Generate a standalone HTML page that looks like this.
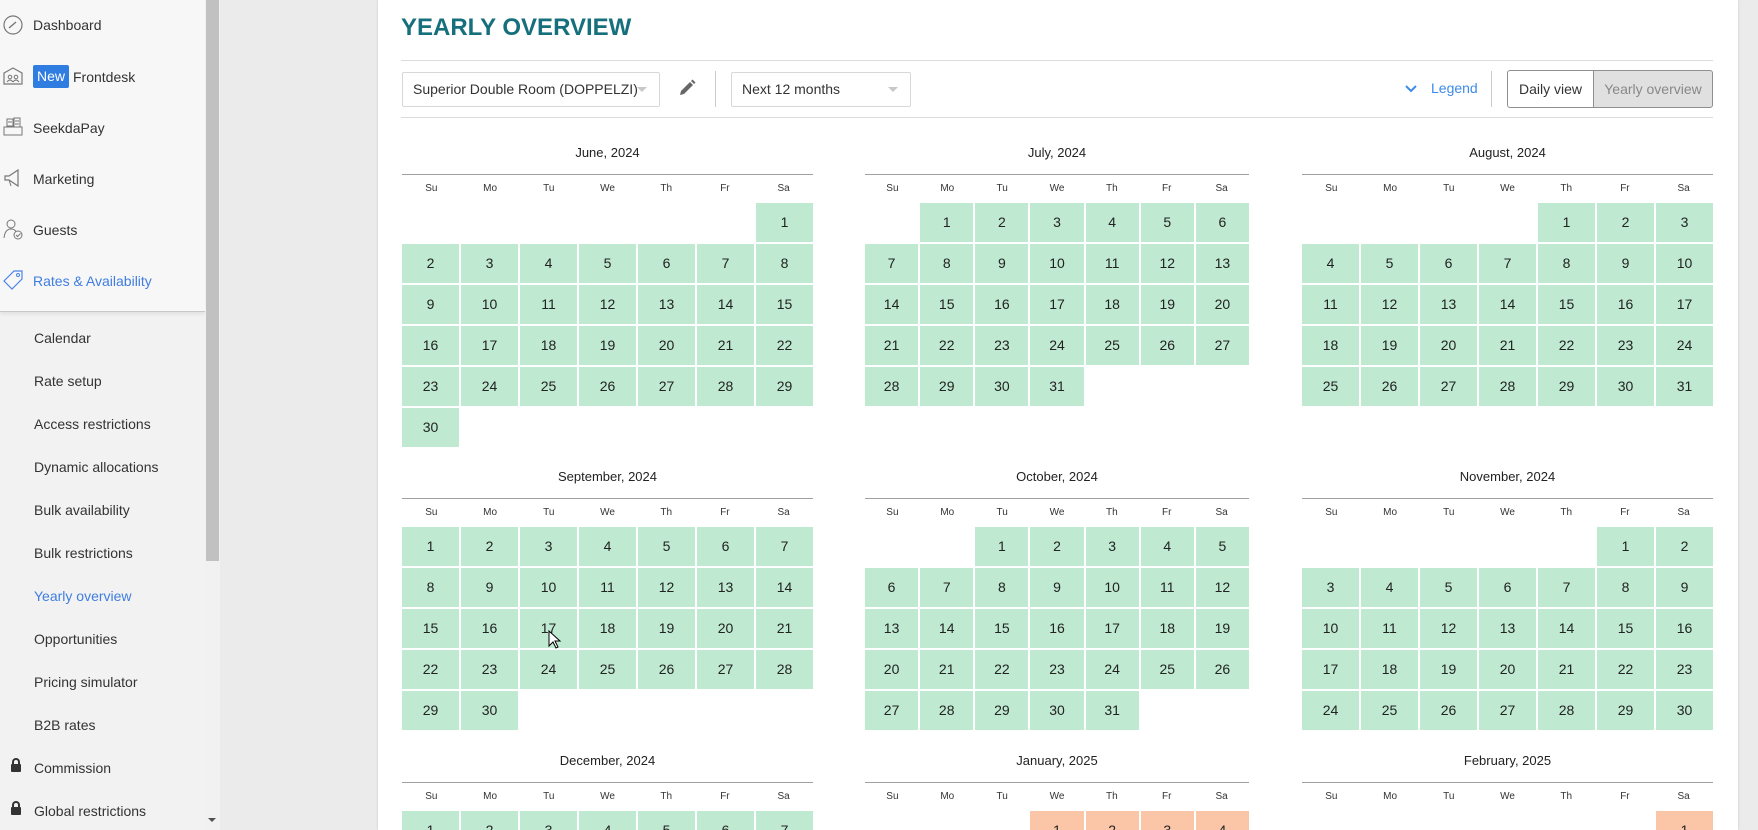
<!DOCTYPE html>
<html><head><meta charset="utf-8"><style>
*{box-sizing:border-box;margin:0;padding:0}
html,body{width:1758px;height:830px;overflow:hidden}
body{background:#ebebeb;font-family:"Liberation Sans",sans-serif;color:#333}
#root{position:relative;width:1758px;height:830px;overflow:hidden}
#side{position:absolute;left:0;top:0;width:205px;height:830px;background:#f2f2f2}
#sidetop{position:absolute;left:0;top:0;width:205px;height:312px;background:#f7f7f7;border-bottom:1px solid #c8c8c8;box-shadow:0 2px 4px rgba(0,0,0,.08)}
.ti{position:absolute;left:33px;font-size:14px;color:#333;line-height:18px}
.ic{position:absolute;left:2px;width:22px;height:22px}
.si{position:absolute;left:34px;font-size:14px;color:#333;line-height:18px}
#sb{position:absolute;left:205px;top:0;width:15px;height:830px;background:#f1f1f1}
#thumb{position:absolute;left:206px;top:0;width:13px;height:561px;background:#c1c1c1}
#card{position:absolute;left:378px;top:0;width:1360px;height:830px;background:#fff;box-shadow:0 0 3px rgba(0,0,0,.12)}
h1{position:absolute;left:401px;top:14px;font-size:24px;color:#16707c;font-weight:bold;letter-spacing:0}
.hl{position:absolute;left:401px;width:1312px;height:1px;background:#dcdcdc}
.sel{position:absolute;top:72px;height:35px;border:1px solid #d8d8d8;border-radius:2px;font-size:14px;line-height:33px;padding-left:10px;color:#333}
.sel:after{content:"";position:absolute;right:12px;top:14px;border-left:5px solid transparent;border-right:5px solid transparent;border-top:5px solid #c8c8c8}
.vd{position:absolute;top:71px;width:1px;height:36px;background:#ccc}
.btn{position:absolute;top:70px;height:38px;border:1px solid #8f8f8f;font-size:14px;line-height:36px;text-align:center}
.m{position:absolute}
.mt{text-align:center;font-size:13px;height:34px;line-height:24px;border-bottom:1px solid #a0a0a0;color:#222}
.dh{display:grid;grid-template-columns:repeat(7,1fr);font-size:10px;height:28px;line-height:28px;text-align:center;color:#333}
.g{display:grid;grid-template-columns:repeat(7,1fr);column-gap:2px;row-gap:2px;grid-auto-rows:39px}
.g b{background:#bfead1;font-weight:normal;font-size:14px;text-align:center;line-height:39px;color:#222}
.g.o b{background:#fbc5a7}
</style></head><body><div id="root">
<div id="side">
<div id="sidetop">
<svg class="ic" style="top:14px" viewBox="0 0 22 22"><circle cx="11" cy="11" r="9" fill="none" stroke="#777" stroke-width="1.2"/><path d="M7 14L14 8" stroke="#777" stroke-width="1.4"/></svg>
<div class="ti" style="top:16px">Dashboard</div>
<svg class="ic" style="top:65px" viewBox="0 0 22 22"><path d="M2 8L11 3L20 8V19H2Z" fill="none" stroke="#777" stroke-width="1.2"/><circle cx="8" cy="12" r="1.8" fill="none" stroke="#777"/><circle cx="14" cy="12" r="1.8" fill="none" stroke="#777"/><path d="M5 17Q8 13 11 17M11 17Q14 13 17 17" fill="none" stroke="#777"/></svg>
<div style="position:absolute;left:33px;top:65px;width:36px;height:23px;background:#2f7de1;border-radius:2px;color:#fff;font-size:14px;line-height:23px;text-align:center">New</div>
<div class="ti" style="left:73px;top:68px">Frontdesk</div>
<svg class="ic" style="top:116px" viewBox="0 0 22 22"><rect x="2" y="11" width="18" height="8" fill="none" stroke="#777"/><rect x="5" y="3" width="6" height="7" fill="none" stroke="#777"/><rect x="12" y="2" width="6" height="9" fill="none" stroke="#777"/><path d="M13 5h4M13 8h4M6 6h4" stroke="#777"/></svg>
<div class="ti" style="top:119px">SeekdaPay</div>
<svg class="ic" style="top:167px" viewBox="0 0 22 22"><path d="M3 9h4l9-6v16l-9-6H3z" fill="none" stroke="#777" stroke-width="1.2"/><path d="M7 13l2 6" stroke="#777"/></svg>
<div class="ti" style="top:170px">Marketing</div>
<svg class="ic" style="top:218px" viewBox="0 0 22 22"><circle cx="9" cy="6" r="4" fill="none" stroke="#777"/><path d="M2 20Q3 11 9 11Q13 11 14 14" fill="none" stroke="#777"/><circle cx="16" cy="17" r="4" fill="none" stroke="#777"/><path d="M14 17l1.5 1.5 3-3" fill="none" stroke="#777"/></svg>
<div class="ti" style="top:221px">Guests</div>
<svg class="ic" style="top:269px" viewBox="0 0 22 22"><path d="M2 12L12 2H20V10L10 20Z" fill="none" stroke="#4d84e6" stroke-width="1.2"/><circle cx="16" cy="6" r="1.5" fill="none" stroke="#4d84e6"/></svg>
<div class="ti" style="top:272px;color:#3f7de0">Rates &amp; Availability</div>
</div>
<div class="si" style="top:329px">Calendar</div>
<div class="si" style="top:372px">Rate setup</div>
<div class="si" style="top:415px">Access restrictions</div>
<div class="si" style="top:458px">Dynamic allocations</div>
<div class="si" style="top:501px">Bulk availability</div>
<div class="si" style="top:544px">Bulk restrictions</div>
<div class="si" style="top:587px;color:#3f7de0">Yearly overview</div>
<div class="si" style="top:630px">Opportunities</div>
<div class="si" style="top:673px">Pricing simulator</div>
<div class="si" style="top:716px">B2B rates</div>
<svg style="position:absolute;left:10px;top:758px" width="12" height="14" viewBox="0 0 12 14"><rect x="1" y="6" width="10" height="8" rx="1" fill="#333"/><path d="M3 6V4a3 3 0 0 1 6 0v2" fill="none" stroke="#333" stroke-width="2"/></svg>
<div class="si" style="top:759px">Commission</div>
<svg style="position:absolute;left:10px;top:801px" width="12" height="14" viewBox="0 0 12 14"><rect x="1" y="6" width="10" height="8" rx="1" fill="#333"/><path d="M3 6V4a3 3 0 0 1 6 0v2" fill="none" stroke="#333" stroke-width="2"/></svg>
<div class="si" style="top:802px">Global restrictions</div>
</div>
<div id="sb"></div><div id="thumb"></div>
<div style="position:absolute;left:208px;top:818px;border-left:4px solid transparent;border-right:4px solid transparent;border-top:4px solid #505050"></div>
<div id="card"></div>
<h1>YEARLY OVERVIEW</h1>
<div class="hl" style="top:60px"></div>
<div class="sel" style="left:402px;width:258px">Superior Double Room (DOPPELZI)</div>
<svg style="position:absolute;left:677px;top:78px" width="20" height="20" viewBox="0 0 20 20"><path d="M3 17l1-4 9-9 3 3-9 9z" fill="#666"/><path d="M14 3l1.5-1.5 3 3L17 6z" fill="#666"/></svg>
<div class="vd" style="left:715px"></div>
<div class="sel" style="left:731px;width:180px">Next 12 months</div>
<svg style="position:absolute;left:1404px;top:84px" width="14" height="10" viewBox="0 0 14 10"><path d="M2 2l5 5 5-5" fill="none" stroke="#3d8be8" stroke-width="2"/></svg>
<div style="position:absolute;left:1431px;top:80px;font-size:14px;color:#3d8be8">Legend</div>
<div class="vd" style="left:1491px"></div>
<div class="btn" style="left:1507px;width:87px;border-radius:3px 0 0 3px;color:#333">Daily view</div>
<div class="btn" style="left:1593px;width:120px;border-radius:0 3px 3px 0;background:#e0e0e0;color:#888">Yearly overview</div>
<div class="hl" style="top:117px"></div>

<div class="m" style="left:402px;top:141px;width:411px"><div class="mt">June, 2024</div><div class="dh"><span>Su</span><span>Mo</span><span>Tu</span><span>We</span><span>Th</span><span>Fr</span><span>Sa</span></div>
<div class="g"><i></i><i></i><i></i><i></i><i></i><i></i><b>1</b><b>2</b><b>3</b><b>4</b><b>5</b><b>6</b><b>7</b><b>8</b><b>9</b><b>10</b><b>11</b><b>12</b><b>13</b><b>14</b><b>15</b><b>16</b><b>17</b><b>18</b><b>19</b><b>20</b><b>21</b><b>22</b><b>23</b><b>24</b><b>25</b><b>26</b><b>27</b><b>28</b><b>29</b><b>30</b></div></div>

<div class="m" style="left:865px;top:141px;width:384px"><div class="mt">July, 2024</div><div class="dh"><span>Su</span><span>Mo</span><span>Tu</span><span>We</span><span>Th</span><span>Fr</span><span>Sa</span></div>
<div class="g"><i></i><b>1</b><b>2</b><b>3</b><b>4</b><b>5</b><b>6</b><b>7</b><b>8</b><b>9</b><b>10</b><b>11</b><b>12</b><b>13</b><b>14</b><b>15</b><b>16</b><b>17</b><b>18</b><b>19</b><b>20</b><b>21</b><b>22</b><b>23</b><b>24</b><b>25</b><b>26</b><b>27</b><b>28</b><b>29</b><b>30</b><b>31</b></div></div>

<div class="m" style="left:1302px;top:141px;width:411px"><div class="mt">August, 2024</div><div class="dh"><span>Su</span><span>Mo</span><span>Tu</span><span>We</span><span>Th</span><span>Fr</span><span>Sa</span></div>
<div class="g"><i></i><i></i><i></i><i></i><b>1</b><b>2</b><b>3</b><b>4</b><b>5</b><b>6</b><b>7</b><b>8</b><b>9</b><b>10</b><b>11</b><b>12</b><b>13</b><b>14</b><b>15</b><b>16</b><b>17</b><b>18</b><b>19</b><b>20</b><b>21</b><b>22</b><b>23</b><b>24</b><b>25</b><b>26</b><b>27</b><b>28</b><b>29</b><b>30</b><b>31</b></div></div>

<div class="m" style="left:402px;top:465px;width:411px"><div class="mt">September, 2024</div><div class="dh"><span>Su</span><span>Mo</span><span>Tu</span><span>We</span><span>Th</span><span>Fr</span><span>Sa</span></div>
<div class="g"><b>1</b><b>2</b><b>3</b><b>4</b><b>5</b><b>6</b><b>7</b><b>8</b><b>9</b><b>10</b><b>11</b><b>12</b><b>13</b><b>14</b><b>15</b><b>16</b><b>17</b><b>18</b><b>19</b><b>20</b><b>21</b><b>22</b><b>23</b><b>24</b><b>25</b><b>26</b><b>27</b><b>28</b><b>29</b><b>30</b></div></div>

<div class="m" style="left:865px;top:465px;width:384px"><div class="mt">October, 2024</div><div class="dh"><span>Su</span><span>Mo</span><span>Tu</span><span>We</span><span>Th</span><span>Fr</span><span>Sa</span></div>
<div class="g"><i></i><i></i><b>1</b><b>2</b><b>3</b><b>4</b><b>5</b><b>6</b><b>7</b><b>8</b><b>9</b><b>10</b><b>11</b><b>12</b><b>13</b><b>14</b><b>15</b><b>16</b><b>17</b><b>18</b><b>19</b><b>20</b><b>21</b><b>22</b><b>23</b><b>24</b><b>25</b><b>26</b><b>27</b><b>28</b><b>29</b><b>30</b><b>31</b></div></div>

<div class="m" style="left:1302px;top:465px;width:411px"><div class="mt">November, 2024</div><div class="dh"><span>Su</span><span>Mo</span><span>Tu</span><span>We</span><span>Th</span><span>Fr</span><span>Sa</span></div>
<div class="g"><i></i><i></i><i></i><i></i><i></i><b>1</b><b>2</b><b>3</b><b>4</b><b>5</b><b>6</b><b>7</b><b>8</b><b>9</b><b>10</b><b>11</b><b>12</b><b>13</b><b>14</b><b>15</b><b>16</b><b>17</b><b>18</b><b>19</b><b>20</b><b>21</b><b>22</b><b>23</b><b>24</b><b>25</b><b>26</b><b>27</b><b>28</b><b>29</b><b>30</b></div></div>

<div class="m" style="left:402px;top:749px;width:411px"><div class="mt">December, 2024</div><div class="dh"><span>Su</span><span>Mo</span><span>Tu</span><span>We</span><span>Th</span><span>Fr</span><span>Sa</span></div>
<div class="g"><b>1</b><b>2</b><b>3</b><b>4</b><b>5</b><b>6</b><b>7</b></div></div>

<div class="m" style="left:865px;top:749px;width:384px"><div class="mt">January, 2025</div><div class="dh"><span>Su</span><span>Mo</span><span>Tu</span><span>We</span><span>Th</span><span>Fr</span><span>Sa</span></div>
<div class="g o"><i></i><i></i><i></i><b>1</b><b>2</b><b>3</b><b>4</b></div></div>

<div class="m" style="left:1302px;top:749px;width:411px"><div class="mt">February, 2025</div><div class="dh"><span>Su</span><span>Mo</span><span>Tu</span><span>We</span><span>Th</span><span>Fr</span><span>Sa</span></div>
<div class="g o"><i></i><i></i><i></i><i></i><i></i><i></i><b>1</b></div></div>

<svg style="position:absolute;left:548px;top:630px" width="14" height="20" viewBox="0 0 14 20"><path d="M1 1v15l4-4 3 6 2-1-3-6h5z" fill="#fff" stroke="#000"/></svg>
</div></body></html>
